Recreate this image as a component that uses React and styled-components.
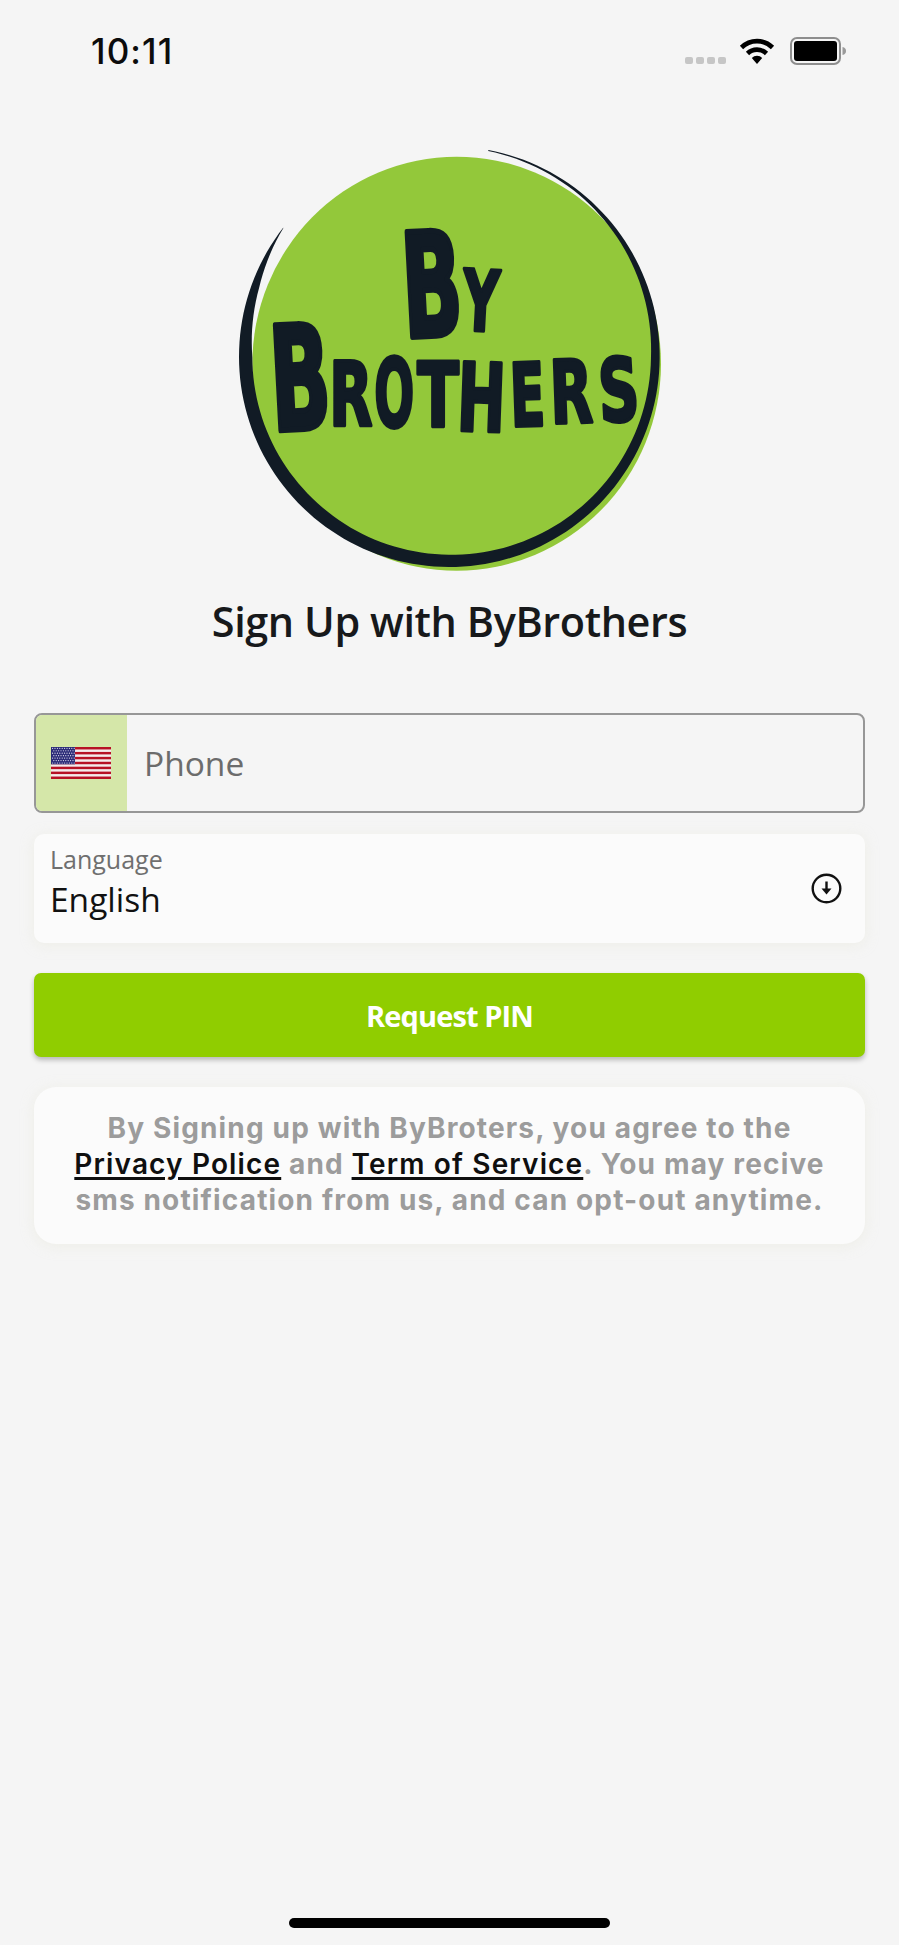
import React from "react";
import styled, { createGlobalStyle } from "styled-components";

const Global = createGlobalStyle`
  html, body { margin: 0; padding: 0; background: #f5f5f5; }
  * { box-sizing: border-box; }
`;

const Page = styled.div`
  width: 899px;
  height: 1945px;
  background: #f5f5f5;
  display: flex;
  flex-direction: column;
  font-family: "Open Sans", sans-serif;
  color: #111;
`;

const StatusBar = styled.div`
  height: 101px;
  padding: 30px 52px 0 91px;
  display: flex;
  align-items: flex-start;
  justify-content: space-between;
`;

const Clock = styled.span`
  font-family: Inter, sans-serif;
  font-weight: 500;
  font-size: 35px;
  line-height: 42px;
  letter-spacing: 1.1px;
  color: #0c0c0c;
`;

const StatusIcons = styled.div`
  display: flex;
  align-items: flex-start;
  padding-top: 14px;
`;

const LogoWrap = styled.div`
  display: flex;
  justify-content: center;
  margin-left: 1px;
  margin-top: 39px;
  height: 440px;
`;

const LogoLetter = styled.text`
  font-family: "DejaVu Sans", sans-serif;
  font-weight: 700;
  font-size: 100px;
  fill: #111b25;
  stroke: #111b25;
  stroke-linejoin: round;
  stroke-width: 4px;
`;

const Title = styled.h1`
  margin: 9px 0 0;
  text-align: center;
  font-size: 41.4px;
  line-height: 64px;
  font-weight: 600;
  letter-spacing: -0.4px;
  color: #17191b;
`;

const Form = styled.div`
  margin-top: 60px;
  padding: 0 34px;
  display: flex;
  flex-direction: column;
`;

const PhoneField = styled.div`
  height: 100px;
  display: flex;
  align-items: stretch;
  border: 2px solid #979797;
  border-radius: 8px;
  overflow: hidden;
  background: #f5f5f5;
`;

const FlagBox = styled.div`
  width: 91px;
  padding-right: 2px;
  background: #d5e7a9;
  display: flex;
  align-items: center;
  justify-content: center;
`;

const PhoneLabel = styled.span`
  align-self: center;
  margin-left: 17px;
  font-size: 33.5px;
  color: #6c6c6c;
  line-height: 44px;
`;

const SelectCard = styled.div`
  margin-top: 21px;
  height: 109px;
  background: #fbfbfb;
  border-radius: 10px;
  padding: 10px 23px 0 16px;
  display: flex;
  justify-content: space-between;
  box-shadow: 0 2px 14px rgba(225, 225, 205, 0.35);
`;

const SelectText = styled.div`
  display: flex;
  flex-direction: column;
`;

const SelectLabel = styled.span`
  font-size: 25px;
  line-height: 30px;
  color: #6f6f6f;
`;

const SelectValue = styled.span`
  font-size: 33.5px;
  line-height: 50px;
  color: #111;
`;

const SelectIcon = styled.div`
  display: flex;
  align-items: center;
  height: 88px;
`;

const PrimaryButton = styled.button`
  margin-top: 30px;
  height: 84px;
  border: 0;
  border-radius: 7px;
  background: #90cd00;
  color: #fff;
  font-family: "Open Sans", sans-serif;
  font-weight: 700;
  font-size: 29px;
  letter-spacing: -0.9px;
  box-shadow: 0 3px 5px rgba(0, 0, 0, 0.25);
`;

const TermsCard = styled.div`
  margin-top: 30px;
  height: 157px;
  padding: 23px 0 0;
  background: #fbfbfb;
  border-radius: 22px;
  box-shadow: 0 2px 14px rgba(225, 225, 205, 0.35);
  text-align: center;
  font-family: Inter, sans-serif;
  font-weight: 700;
  font-size: 28px;
  line-height: 36px;
  letter-spacing: 1.15px;
  color: #9c9c9c;
`;

const TermsLink = styled.a`
  color: #0f0f0f;
  font-weight: 600;
  text-decoration: underline;
  text-decoration-thickness: 3px;
  text-underline-offset: 3px;
`;

const HomeBar = styled.div`
  margin: auto auto 17px;
  width: 321px;
  height: 10px;
  border-radius: 5px;
  background: #000;
`;

/* brush ring: a circle whose thickness varies along its sweep */
const thickness = [[10.7, 3], [40, 9], [60, 15], [90, 26], [135, 31], [180, 37], [225, 40], [270, 40], [290, 24], [307.8, 1]];
const thicknessAt = (a) => {
  for (let i = 1; i < thickness.length; i++) {
    const [a0, t0] = thickness[i - 1];
    const [a1, t1] = thickness[i];
    if (a <= a1) return t0 + ((t1 - t0) * (a - a0)) / (a1 - a0);
  }
  return 1;
};
const ringPoint = (a, r) => {
  const rad = (a * Math.PI) / 180;
  return `${(688 + r * Math.sin(rad)).toFixed(1)} ${(650 - r * Math.cos(rad)).toFixed(1)}`;
};
const ringAngles = Array.from({ length: 150 }, (_, i) => 10.7 + (i * (307.8 - 10.7)) / 149);
const swoosh =
  "M" +
  ringAngles.map((a) => ringPoint(a, 631)).join(" L") +
  " L" +
  [...ringAngles].reverse().map((a) => ringPoint(a, 631 - thicknessAt(a))).join(" L") +
  " Z";

const ADV = { B: 76.2, Y: 72.4, R: 77, O: 85, T: 68.2, H: 83.7, E: 68.3, S: 72 };
const letters = [
  ["B", 545, 272, 180, 316, -3],
  ["Y", 728, 388, 110, 184, 3],
  ["B", 150, 552, 180, 316, -3],
  ["R", 328, 662, 130, 196, 0],
  ["O", 463, 656, 120, 206, 0],
  ["T", 592, 662, 125, 196, 0],
  ["H", 712, 667, 145, 206, 2],
  ["E", 870, 667, 105, 191, -2],
  ["R", 990, 657, 128, 191, -2],
  ["S", 1135, 652, 122, 191, -3],
];

const Logo = () => (
  <svg width="460" height="440" viewBox="0 0 1380 1320" role="img" aria-label="By Brothers">
    <ellipse cx="710" cy="671" rx="613" ry="621" fill="#93c83a" />
    <path d={swoosh} fill="#111b25" />
    {letters.map(([c, x, y, w, h, r], i) => {
      const sx = w / ADV[c];
      const sy = h / 72.9;
      return (
        <LogoLetter
          key={i}
          transform={`rotate(${r} ${x + w / 2} ${y + h / 2}) translate(${x} ${y + h}) scale(${sx} ${sy})`}
        >
          {c}
        </LogoLetter>
      );
    })}
  </svg>
);

const Flag = () => {
  const stripes = Array.from({ length: 7 }, (_, i) => i);
  const stars = [];
  for (let r = 0; r < 7; r++) {
    for (let c = 0; c < 10; c++) {
      stars.push(<circle key={`${r}-${c}`} cx={1.6 + c * 2.4 + (r % 2 ? 1.2 : 0)} cy={1.3 + r * 2.45} r="0.6" fill="#e8e8f4" />);
    }
  }
  return (
    <svg width="60" height="32" viewBox="0 0 60 32">
      <rect width="60" height="32" fill="#f4ecec" />
      {stripes.map((i) => (
        <rect key={i} y={i * (32 / 13) * 2} width="60" height={32 / 13} fill="#b71225" />
      ))}
      <rect width="24" height="17.3" fill="#2c2c78" />
      {stars}
    </svg>
  );
};

const Signal = () => (
  <svg width="42" height="7" viewBox="0 0 42 7" style={{ marginTop: 13 }}>
    {[0, 11, 22, 33].map((x) => (
      <rect key={x} x={x} y="0" width="8" height="7" rx="2" fill="#c6c6c6" />
    ))}
  </svg>
);

const Wifi = () => (
  <svg width="36" height="26" viewBox="0 0 36 26" style={{ marginLeft: 12, marginTop: -6 }}>
    <path d="M2.5 9.5 A22 22 0 0 1 33.5 9.5" fill="none" stroke="#000" strokeWidth="4.6" />
    <path d="M8.5 15.5 A13.5 13.5 0 0 1 27.5 15.5" fill="none" stroke="#000" strokeWidth="4.6" />
    <path d="M12.8 20 A7 7 0 0 1 23.2 20 L18 26 Z" fill="#000" />
  </svg>
);

const Battery = () => (
  <svg width="57" height="28" viewBox="0 0 57 28" style={{ marginLeft: 15, marginTop: -7 }}>
    <rect x="1" y="1" width="49" height="26" rx="6" fill="none" stroke="#8e8e8e" strokeWidth="2" />
    <rect x="4" y="4" width="43" height="20" rx="3" fill="#000" />
    <path d="M52.5 10 C55 10.5 56 12 56 14 C56 16 55 17.5 52.5 18 Z" fill="#9a9a9a" />
  </svg>
);

const DownCircle = () => (
  <svg width="31" height="31" viewBox="0 0 31 31">
    <circle cx="15.5" cy="15.5" r="13.8" fill="none" stroke="#111" strokeWidth="2.4" />
    <path d="M15.5 8.5 V17" stroke="#111" strokeWidth="2.4" />
    <path d="M10.5 15.5 H20.5 L15.5 21.5 Z" fill="#111" />
  </svg>
);

export default function App() {
  return (
    <Page>
      <Global />
      <StatusBar>
        <Clock>10:11</Clock>
        <StatusIcons>
          <Signal />
          <Wifi />
          <Battery />
        </StatusIcons>
      </StatusBar>
      <LogoWrap>
        <Logo />
      </LogoWrap>
      <Title>Sign Up with ByBrothers</Title>
      <Form>
        <PhoneField>
          <FlagBox>
            <Flag />
          </FlagBox>
          <PhoneLabel>Phone</PhoneLabel>
        </PhoneField>
        <SelectCard>
          <SelectText>
            <SelectLabel>Language</SelectLabel>
            <SelectValue>English</SelectValue>
          </SelectText>
          <SelectIcon>
            <DownCircle />
          </SelectIcon>
        </SelectCard>
        <PrimaryButton>Request PIN</PrimaryButton>
        <TermsCard>
          By Signing up with ByBroters, you agree to the
          <br />
          <TermsLink>Privacy Police</TermsLink> and <TermsLink>Term of Service</TermsLink>. You may recive
          <br />
          sms notification from us, and can opt-out anytime.
        </TermsCard>
      </Form>
      <HomeBar />
    </Page>
  );
}
